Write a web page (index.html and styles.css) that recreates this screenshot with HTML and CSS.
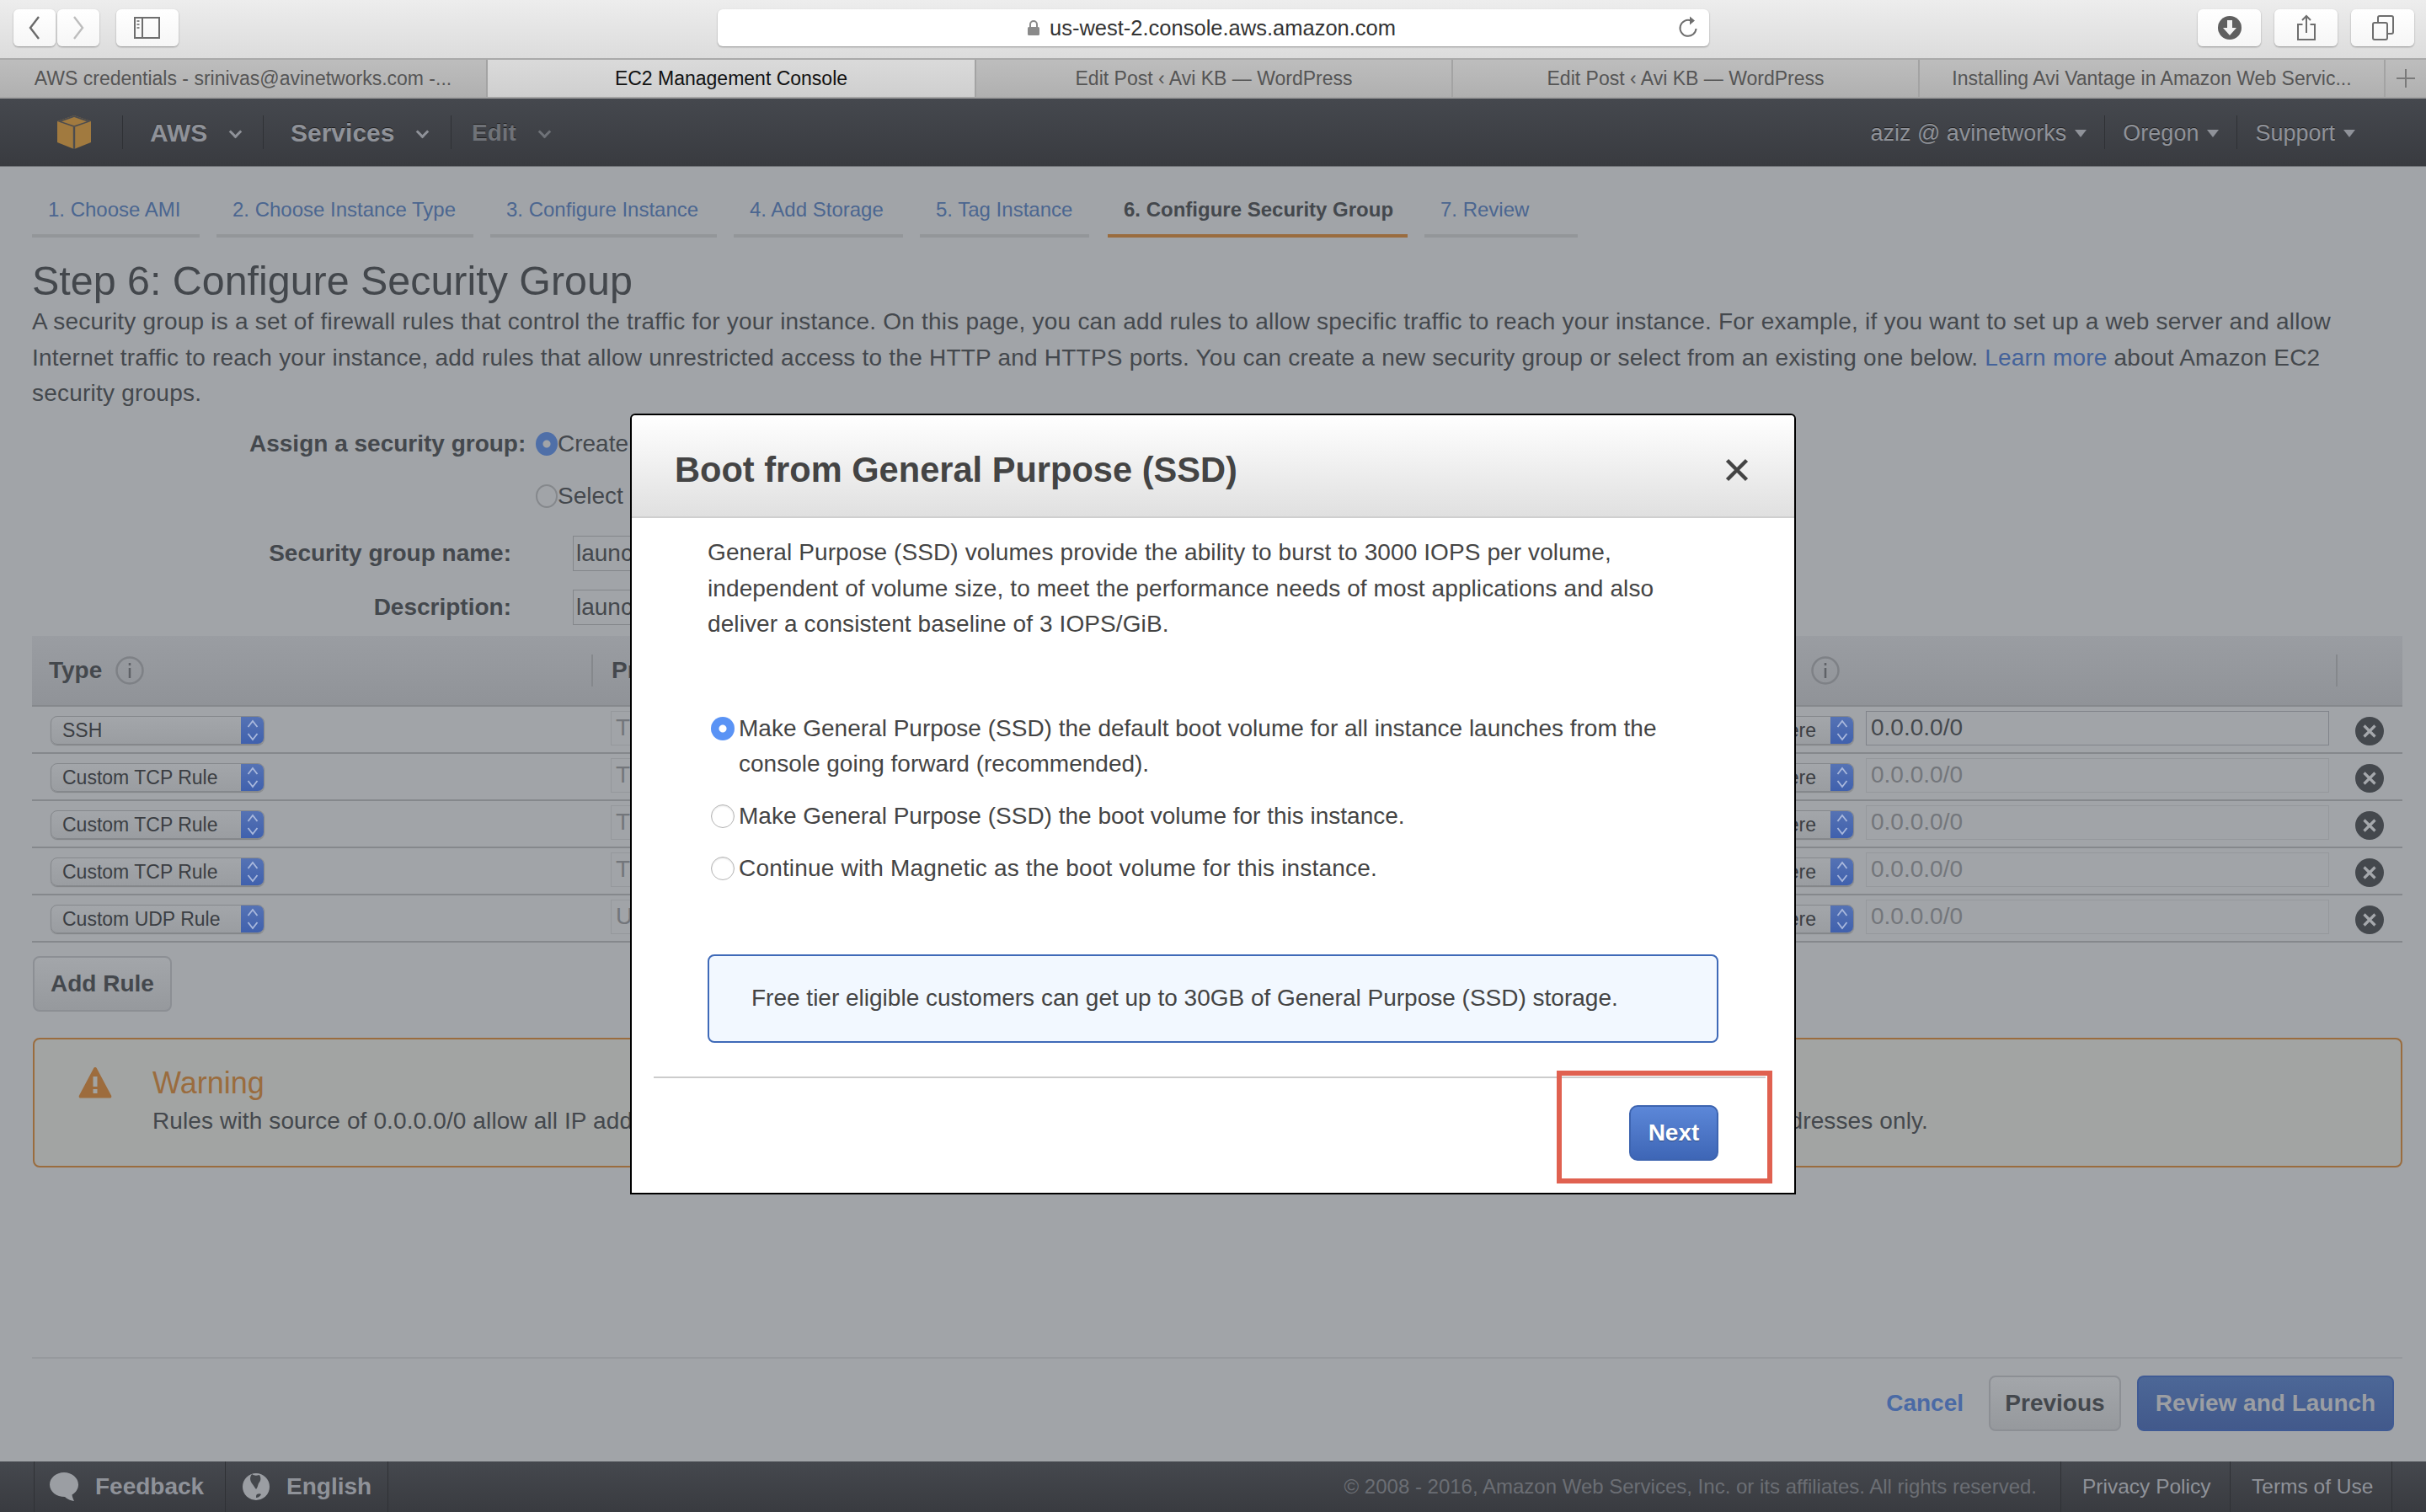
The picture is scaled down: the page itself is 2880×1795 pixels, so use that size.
FILE: index.html
```html
<!DOCTYPE html>
<html lang="en">
<head>
<meta charset="utf-8">
<title>EC2 Management Console</title>
<link rel="stylesheet" href="styles.css">
</head>
<body>
<header class="toolbar">
  <div class="tool-group nav-buttons">
    <button class="tool-btn back"><svg width="16" height="30" viewBox="0 0 16 30"><path d="M13 2 3 15l10 13" fill="none" stroke="#6a6a6a" stroke-width="2.4"/></svg></button>
    <button class="tool-btn forward"><svg width="16" height="30" viewBox="0 0 16 30"><path d="M3 2l10 13L3 28" fill="none" stroke="#bdbdbd" stroke-width="2.4"/></svg></button>
  </div>
  <button class="tool-btn sidebar"><svg width="32" height="26" viewBox="0 0 32 26"><rect x="1" y="1" width="29" height="24" fill="none" stroke="#6e6e6e" stroke-width="2"/><path d="M10 1v24" stroke="#6e6e6e" stroke-width="2"/><path d="M3.5 5h3M3.5 9h3M3.5 13h3" stroke="#8a8a8a" stroke-width="2"/></svg></button>
  <div class="address">
    <svg class="lock" width="16" height="20" viewBox="0 0 16 20"><path d="M4 9V6a4 4 0 0 1 8 0v3" fill="none" stroke="#8a8a8a" stroke-width="2"/><rect x="1" y="9" width="14" height="10" rx="1.5" fill="#8a8a8a"/></svg>
    <span class="url">us-west-2.console.aws.amazon.com</span>
    <svg class="reload" width="26" height="30" viewBox="0 0 26 30"><path d="M16.500 6.500A9.500 9.500 0 1 0 22.500 16" fill="none" stroke="#6e6e6e" stroke-width="2"/><path d="M15 1.500 21 6.500 15 11.500z" fill="#6e6e6e"/></svg>
  </div>
  <div class="tool-group right-tools">
    <button class="tool-btn wide"><svg width="30" height="30" viewBox="0 0 30 30"><circle cx="15" cy="15" r="14" fill="#5f5f5f"/><path d="M12 6h6v9h5l-8 9-8-9h5z" fill="#f2f2f2"/></svg></button>
    <button class="tool-btn wide"><svg width="26" height="32" viewBox="0 0 26 32"><path d="M8.500 12H3v18h20V12h-5.500" fill="none" stroke="#6e6e6e" stroke-width="2"/><path d="M13 22V2M8 7l5-5 5 5" fill="none" stroke="#6e6e6e" stroke-width="2"/></svg></button>
    <button class="tool-btn wide"><svg width="28" height="30" viewBox="0 0 28 30"><rect x="2" y="9" width="17" height="20" rx="2" fill="none" stroke="#6e6e6e" stroke-width="2"/><path d="M8 9V3a2 2 0 0 1 2-2h14a2 2 0 0 1 2 2v17a2 2 0 0 1-2 2h-5" fill="none" stroke="#6e6e6e" stroke-width="2"/></svg></button>
  </div>
</header>

<nav class="tabs">
  <div class="tab t1">AWS credentials - srinivas@avinetworks.com -...</div>
  <div class="tab t2 active">EC2 Management Console</div>
  <div class="tab t3">Edit Post ‹ Avi KB — WordPress</div>
  <div class="tab t4">Edit Post ‹ Avi KB — WordPress</div>
  <div class="tab t5">Installing Avi Vantage in Amazon Web Servic...</div>
  <div class="tab-add"><svg width="22" height="22" viewBox="0 0 22 22"><path d="M11 0v22M0 11h22" stroke="#7a7a7a" stroke-width="2"/></svg></div>
</nav>

<nav class="awsnav">
  <div class="nav-cell logo-cell">
    <svg width="40" height="40" viewBox="0 0 40 40"><path d="M20 0 40 7v25L20 40 0 32V7z" fill="#a17a3f"/><path d="M0 7 20 14 40 7 20 0z" fill="#4b4c4f"/><path d="M5 7.200 20 2 35 7.200 20 12.300z" fill="#a17a3f"/><path d="M18.800 14h2.400v26h-2.400z" fill="#4b4c4f"/></svg>
  </div>
  <div class="nav-cell aws"><b>AWS</b><i class="chev"></i></div>
  <div class="nav-cell services"><b>Services</b><i class="chev"></i></div>
  <div class="nav-cell edit"><b>Edit</b><i class="chev"></i></div>
  <div class="nav-right">
    <div class="nav-link user">aziz @ avinetworks<i class="caret"></i></div>
    <div class="nav-link region">Oregon<i class="caret"></i></div>
    <div class="nav-link support">Support<i class="caret"></i></div>
  </div>
</nav>

<main class="main">
  <ul class="steps">
    <li class="s1">1. Choose AMI</li>
    <li class="s2">2. Choose Instance Type</li>
    <li class="s3">3. Configure Instance</li>
    <li class="s4">4. Add Storage</li>
    <li class="s5">5. Tag Instance</li>
    <li class="s6 current">6. Configure Security Group</li>
    <li class="s7">7. Review</li>
  </ul>
  <h1 class="page-title">Step 6: Configure Security Group</h1>
  <p class="intro">A security group is a set of firewall rules that control the traffic for your instance. On this page, you can add rules to allow specific traffic to reach your instance. For example, if you want to set up a web server and allow Internet traffic to reach your instance, add rules that allow unrestricted access to the HTTP and HTTPS ports. You can create a new security group or select from an existing one below. <a>Learn more</a> about Amazon EC2 security groups.</p>

  <div class="form">
    <div class="assign-row">
      <label class="assign-label">Assign a security group:</label>
      <span class="radio on-dim"></span><span class="radio-text">Create a new security group</span>
    </div>
    <div class="assign-row second">
      <span class="radio off-dim"></span><span class="radio-text">Select an existing security group</span>
    </div>
    <div class="field-row first">
      <label class="field-label">Security group name:</label>
      <span class="text-input">launch-wizard-1</span>
    </div>
    <div class="field-row">
      <label class="field-label">Description:</label>
      <span class="text-input">launch-wizard-1 created 2016-05-09</span>
    </div>
  </div>

  <div class="table">
    <div class="thead">
      <div class="th type-th">Type <svg class="info" width="34" height="36" viewBox="0 0 34 36"><circle cx="17" cy="18" r="15.500" fill="none" stroke="#7e8186" stroke-width="2.500"/><path d="M17 9v3M17 15v12" stroke="#5f6267" stroke-width="2.500"/></svg></div>
      <div class="th proto-th">Protocol</div>
      <div class="th source-th"><svg class="info" width="34" height="36" viewBox="0 0 34 36"><circle cx="17" cy="18" r="15.500" fill="none" stroke="#7e8186" stroke-width="2.500"/><path d="M17 9v3M17 15v12" stroke="#5f6267" stroke-width="2.500"/></svg></div>
      <div class="th end-th"></div>
    </div>

    <div class="row">
      <div class="select type-select"><span class="select-text">SSH</span><span class="stepper"><svg width="14" height="28" viewBox="0 0 14 28"><path d="M1.500 10 7 3l5.500 7M1.500 18 7 25l5.500-7" fill="none" stroke="#a9b8dc" stroke-width="1.800"/></svg></span></div>
      <span class="cell-input proto">TCP</span>
      <span class="cell-input port">22</span>
      <div class="select source-select"><span class="select-text">Anywhere</span><span class="stepper"><svg width="14" height="28" viewBox="0 0 14 28"><path d="M1.500 10 7 3l5.500 7M1.500 18 7 25l5.500-7" fill="none" stroke="#a9b8dc" stroke-width="1.800"/></svg></span></div>
      <span class="cell-input cidr focus">0.0.0.0/0</span>
      <svg class="del" width="34" height="34" viewBox="0 0 34 34"><circle cx="17" cy="17" r="17" fill="#44484d"/><path d="M10.500 10.500l13 13M23.500 10.500l-13 13" stroke="#a5a8ac" stroke-width="3.200"/></svg>
    </div>
    <div class="row">
      <div class="select type-select"><span class="select-text">Custom TCP Rule</span><span class="stepper"><svg width="14" height="28" viewBox="0 0 14 28"><path d="M1.500 10 7 3l5.500 7M1.500 18 7 25l5.500-7" fill="none" stroke="#a9b8dc" stroke-width="1.800"/></svg></span></div>
      <span class="cell-input proto">TCP</span>
      <span class="cell-input port">8443</span>
      <div class="select source-select"><span class="select-text">Anywhere</span><span class="stepper"><svg width="14" height="28" viewBox="0 0 14 28"><path d="M1.500 10 7 3l5.500 7M1.500 18 7 25l5.500-7" fill="none" stroke="#a9b8dc" stroke-width="1.800"/></svg></span></div>
      <span class="cell-input cidr">0.0.0.0/0</span>
      <svg class="del" width="34" height="34" viewBox="0 0 34 34"><circle cx="17" cy="17" r="17" fill="#44484d"/><path d="M10.500 10.500l13 13M23.500 10.500l-13 13" stroke="#a5a8ac" stroke-width="3.200"/></svg>
    </div>
    <div class="row">
      <div class="select type-select"><span class="select-text">Custom TCP Rule</span><span class="stepper"><svg width="14" height="28" viewBox="0 0 14 28"><path d="M1.500 10 7 3l5.500 7M1.500 18 7 25l5.500-7" fill="none" stroke="#a9b8dc" stroke-width="1.800"/></svg></span></div>
      <span class="cell-input proto">TCP</span>
      <span class="cell-input port">8080</span>
      <div class="select source-select"><span class="select-text">Anywhere</span><span class="stepper"><svg width="14" height="28" viewBox="0 0 14 28"><path d="M1.500 10 7 3l5.500 7M1.500 18 7 25l5.500-7" fill="none" stroke="#a9b8dc" stroke-width="1.800"/></svg></span></div>
      <span class="cell-input cidr">0.0.0.0/0</span>
      <svg class="del" width="34" height="34" viewBox="0 0 34 34"><circle cx="17" cy="17" r="17" fill="#44484d"/><path d="M10.500 10.500l13 13M23.500 10.500l-13 13" stroke="#a5a8ac" stroke-width="3.200"/></svg>
    </div>
    <div class="row">
      <div class="select type-select"><span class="select-text">Custom TCP Rule</span><span class="stepper"><svg width="14" height="28" viewBox="0 0 14 28"><path d="M1.500 10 7 3l5.500 7M1.500 18 7 25l5.500-7" fill="none" stroke="#a9b8dc" stroke-width="1.800"/></svg></span></div>
      <span class="cell-input proto">TCP</span>
      <span class="cell-input port">443</span>
      <div class="select source-select"><span class="select-text">Anywhere</span><span class="stepper"><svg width="14" height="28" viewBox="0 0 14 28"><path d="M1.500 10 7 3l5.500 7M1.500 18 7 25l5.500-7" fill="none" stroke="#a9b8dc" stroke-width="1.800"/></svg></span></div>
      <span class="cell-input cidr">0.0.0.0/0</span>
      <svg class="del" width="34" height="34" viewBox="0 0 34 34"><circle cx="17" cy="17" r="17" fill="#44484d"/><path d="M10.500 10.500l13 13M23.500 10.500l-13 13" stroke="#a5a8ac" stroke-width="3.200"/></svg>
    </div>
    <div class="row">
      <div class="select type-select"><span class="select-text">Custom UDP Rule</span><span class="stepper"><svg width="14" height="28" viewBox="0 0 14 28"><path d="M1.500 10 7 3l5.500 7M1.500 18 7 25l5.500-7" fill="none" stroke="#a9b8dc" stroke-width="1.800"/></svg></span></div>
      <span class="cell-input proto">UDP</span>
      <span class="cell-input port">53</span>
      <div class="select source-select"><span class="select-text">Anywhere</span><span class="stepper"><svg width="14" height="28" viewBox="0 0 14 28"><path d="M1.500 10 7 3l5.500 7M1.500 18 7 25l5.500-7" fill="none" stroke="#a9b8dc" stroke-width="1.800"/></svg></span></div>
      <span class="cell-input cidr">0.0.0.0/0</span>
      <svg class="del" width="34" height="34" viewBox="0 0 34 34"><circle cx="17" cy="17" r="17" fill="#44484d"/><path d="M10.500 10.500l13 13M23.500 10.500l-13 13" stroke="#a5a8ac" stroke-width="3.200"/></svg>
    </div>
  </div>

  <button class="btn add-rule">Add Rule</button>

  <section class="warning">
    <svg class="warn-icon" width="40" height="38" viewBox="0 0 40 38"><path d="M20 1c1 0 1.500.5 2 1.500l17 32c.8 1.500 0 3-1.500 3h-35C1 37.500.2 36 1 34.500l17-32C18.500 1.500 19 1 20 1z" fill="#9d6c3d"/><path d="M17.500 12h5v12h-5zM17.500 27h5v5h-5z" fill="#a2a4a3"/></svg>
    <div class="warn-body">
      <div class="warn-title">Warning</div>
      <div class="warn-text">Rules with source of 0.0.0.0/0 allow all IP addresses to access your instance. We recommend setting security group rules to allow access from known IP addresses only.</div>
    </div>
  </section>

  <div class="actions">
    <a class="cancel">Cancel</a>
    <button class="btn previous">Previous</button>
    <button class="btn review">Review and Launch</button>
  </div>
</main>

<footer class="footer">
  <div class="foot-cell feedback">
    <svg width="34" height="34" viewBox="0 0 34 34"><path d="M17 0c9.400 0 17 6.500 17 14.500 0 5-3 9.500-7.500 12 .3 2.500 1.200 5 2.500 7.500-4-.5-8-2.200-11-5C8 29 0 23 0 14.500 0 6.500 7.600 0 17 0z" fill="#9b9ea3"/></svg>
    <b>Feedback</b>
  </div>
  <div class="foot-cell language">
    <svg width="32" height="34" viewBox="0 0 32 34"><circle cx="16" cy="17" r="16" fill="#9b9ea3"/><path d="M11 2c3 2 5 2 9 1 2 3 2 7-1 10-1 2-1 5-3 7-2-2-3-5-5-7-2-3-3-7 0-11zM17 26c2-1 4-1 5 0-1 2-3 4-6 4 0-2 0-3 1-4z" fill="#44474c"/></svg>
    <b>English</b>
  </div>
  <div class="copyright">© 2008 - 2016, Amazon Web Services, Inc. or its affiliates. All rights reserved.</div>
  <div class="foot-link privacy">Privacy Policy</div>
  <div class="foot-link terms">Terms of Use</div>
</footer>

<div class="modal">
  <div class="modal-head">
    <h2>Boot from General Purpose (SSD)</h2>
    <svg class="close" width="28" height="28" viewBox="0 0 28 28"><path d="M2.500 2.500l23 23M25.500 2.500l-23 23" stroke="#444" stroke-width="4.500"/></svg>
  </div>
  <div class="modal-body">
    <p class="modal-text">General Purpose (SSD) volumes provide the ability to burst to 3000 IOPS per volume, independent of volume size, to meet the performance needs of most applications and also deliver a consistent baseline of 3 IOPS/GiB.</p>
    <div class="option first-option"><span class="mradio checked"></span><span class="option-text">Make General Purpose (SSD) the default boot volume for all instance launches from the console going forward (recommended).</span></div>
    <div class="option"><span class="mradio"></span><span class="option-text">Make General Purpose (SSD) the boot volume for this instance.</span></div>
    <div class="option last-option"><span class="mradio"></span><span class="option-text">Continue with Magnetic as the boot volume for this instance.</span></div>
    <div class="free-tier">Free tier eligible customers can get up to 30GB of General Purpose (SSD) storage.</div>
  </div>
  <div class="modal-foot">
    <button class="next">Next</button>
  </div>
</div>
<div class="highlight"></div>
</body>
</html>
```
FILE: styles.css
```css
* { box-sizing: border-box; }
html, body { margin: 0; padding: 0; }
body {
  width: 2880px; height: 1795px; overflow: hidden; position: relative;
  display: flex; flex-direction: column;
  font-family: "Liberation Sans", Arial, sans-serif; font-size: 28px; color: #44484d;
  background: #a1a4a8;
}
button { font-family: inherit; padding: 0; margin: 0; }

/* browser chrome */
.toolbar {
  height: 71px; flex: none; display: flex; align-items: flex-start; padding: 11px 0 0 16px;
  background: linear-gradient(#ededed, #dcdcdc); border-bottom: 2px solid #a9a9a9;
}
.tool-group { display: flex; }
.nav-buttons { gap: 2px; }
.tool-btn {
  height: 44px; width: 50px; background: linear-gradient(#fff, #f6f6f6); border: 0; border-radius: 6px;
  box-shadow: 0 1px 2px rgba(0,0,0,.35); display: flex; align-items: center; justify-content: center;
}
.sidebar { width: 74px; margin-left: 20px; }
.address {
  width: 1177px; height: 44px; margin-left: 640px; background: #fff; border-radius: 6px; position: relative;
  box-shadow: 0 1px 2px rgba(0,0,0,.35); display: flex; align-items: center; padding-left: 367px;
}
.lock { margin-right: 11px; }
.url { font-size: 25.500px; color: #333; }
.reload { position: absolute; right: 12px; top: 7px; }
.right-tools { margin-left: 580px; gap: 16px; }
.wide { width: 75px; }

.tabs { height: 46px; flex: none; display: flex; background: linear-gradient(#bdbdbd, #b0b0b0); border-bottom: 2px solid #a3a3a3; font-size: 23px; color: #555; }
.tab { display: flex; align-items: center; justify-content: center; border-right: 2px solid #a3a3a3; white-space: nowrap; }
.t1 { width: 579px; }
.t2 { width: 580px; }
.t3 { width: 566px; }
.t4 { width: 554px; }
.t5 { width: 553px; }
.tab.active { background: linear-gradient(#dadada, #cfcfcf); color: #111; }
.tab-add { flex: 1; display: flex; align-items: center; justify-content: center; }

/* console nav */
.awsnav {
  height: 81px; flex: none; display: flex; align-items: center; color: #8f9299; border-bottom: 1px solid #6e7175;
  background: linear-gradient(#45484e, #393b40);
}
.nav-cell { height: 40px; display: flex; align-items: center; border-right: 1px solid #2f3135; font-size: 30px; padding-top: 2px; }
.nav-cell b { text-shadow: 0 -1px 0 #222; }
.logo-cell { width: 146px; padding-left: 68px; padding-top: 0; }
.aws { width: 167px; padding-left: 32px; }
.services { width: 223px; padding-left: 32px; }
.edit { border: 0; padding-left: 24px; color: #6f7278; }
.edit b { font-size: 28px; }
.chev { display: inline-block; width: 11px; height: 11px; border-right: 3px solid #8f9299; border-bottom: 3px solid #8f9299; transform: rotate(45deg); margin: -4px 0 0 28px; }
.edit .chev { border-color: #6f7278; }
.nav-right { margin-left: auto; display: flex; height: 40px; font-size: 27px; }
.nav-link { display: flex; align-items: center; border-right: 1px solid #2f3135; padding: 2px 21px 0; text-shadow: 0 -1px 0 #222; }
.nav-link:last-child { border: 0; padding-right: 84px; }
.caret { width: 0; height: 0; border: 7px solid transparent; border-top: 9px solid #8f9299; border-bottom: 0; margin-left: 10px; }

/* main page */
.main { flex: 1; min-height: 0; padding: 0 28px 0 38px; display: flex; flex-direction: column; }
.steps { list-style: none; margin: 32px 0 0; padding: 0; display: flex; gap: 20px; font-size: 24px; color: #4b6690; height: 52px; }
.steps li { height: 52px; padding: 5px 0 0 19px; border-bottom: 4px solid #939699; white-space: nowrap; }
.s1 { width: 199px; } .s2 { width: 305px; } .s3 { width: 269px; } .s4 { width: 201px; } .s5 { width: 201px; }
.s6 { width: 356px; margin-left: 2px; } .s7 { width: 182px; }
.steps li.current { border-bottom-color: #9a6c3e; color: #44484d; font-weight: bold; }
.page-title { font-size: 48.400px; font-weight: normal; line-height: 56px; margin: 23px 0 0; color: #43474c; }
.intro { margin: 0; line-height: 42.500px; font-size: 28px; width: 2800px; letter-spacing: .22px; }
.intro a { color: #44629a; }

.form { margin-bottom: 13px; flex: none; }
.assign-row { display: flex; align-items: center; height: 28px; margin-top: 24px; padding-left: 598px; white-space: nowrap; }
.assign-row.second { margin-top: 34px; }
.assign-label { font-weight: bold; margin-left: -340px; width: 340px; text-align: right; padding-right: 19px; flex: none; }
.radio { width: 26px; height: 28px; border-radius: 50%; flex: none; }
.on-dim { background: radial-gradient(circle, #a1a4a8 0 4px, #4f6fa8 5px); }
.off-dim { border: 2px solid #85888c; }
.field-row { display: flex; align-items: center; height: 42px; margin-top: 22px; white-space: nowrap; }
.field-row.first { margin-top: 33px; }
.field-label { width: 569px; text-align: right; font-weight: bold; margin-right: 73px; flex: none; }
.text-input { width: 400px; height: 42px; border: 1px solid #84878b; padding-left: 3px; line-height: 40px; overflow: hidden; }

.table { flex: none; }
.thead { height: 84px; display: flex; align-items: center; background: linear-gradient(#9a9da2, #909398); border-bottom: 2px solid #85888c; font-weight: bold; }
.th { height: 38px; display: flex; align-items: center; }
.type-th { width: 666px; padding-left: 20px; border-right: 2px solid #85888c; gap: 16px; }
.proto-th { padding-left: 22px; width: 1446px; }
.source-th { width: 623px; }
.end-th { border-left: 2px solid #85888c; }
.row { height: 56px; display: grid; grid-template-columns: 665px 300px 300px 890px 550px 1fr; align-items: start; padding-left: 22px; border-bottom: 2px solid #85888c; font-size: 23px; }
.select { height: 34px; margin-top: 11px; border: 1px solid #85888c; border-radius: 8px; display: flex; overflow: hidden; background: linear-gradient(#a3a6aa, #9a9da1); box-shadow: 0 1px 1px rgba(0,0,0,.2); }
.select-text { flex: 1; padding-left: 13px; line-height: 33px; color: #3b3e43; white-space: nowrap; }
.stepper { width: 28px; flex: none; background: linear-gradient(#5673b4, #3f60ad); display: flex; align-items: center; justify-content: center; margin: -1px -1px -1px 0; }
.type-select { width: 254px; }
.source-select { width: 200px; justify-self: end; margin-right: 14px; }
.source-select .select-text { text-align: right; padding-right: 17px; }
.cell-input { height: 41px; margin-top: 5px; border: 1px solid #95989c; color: #73767b; font-size: 28px; line-height: 37px; padding-left: 5px; }
.cell-input.proto, .cell-input.port { margin-right: 20px; }
.cidr { width: 550px; }
.cidr.focus { color: #44484d; border-color: #80838a; }
.del { margin: 12px 0 0 31px; }

.btn { border-radius: 8px; font-weight: bold; font-size: 28px; border: 2px solid #8c8f94; background: linear-gradient(#a3a6aa, #96999d); color: #44484d; }
.add-rule { width: 165px; height: 66px; margin-top: 16px; flex: none; align-self: flex-start; margin-left: 1px; }

.warning { height: 154px; flex: none; margin: 31px 0 0 1px; border: 2px solid #9a6c3e; border-radius: 8px; background: #a2a4a3; display: flex; padding-left: 52px; }
.warn-icon { margin-top: 32px; flex: none; }
.warn-body { margin-left: 48px; padding-top: 30px; }
.warn-title { font-size: 36px; line-height: 44px; color: #9a6c3e; }
.warn-text { font-size: 28px; line-height: 46px; white-space: nowrap; letter-spacing: .12px; }

.actions { flex: none; margin-top: 225px; border-top: 2px solid #96999d; display: flex; align-items: center; justify-content: flex-end; padding: 20px 10px 0 0; }
.cancel { font-weight: bold; color: #4a6aa5; margin-right: 30px; }
.previous { width: 157px; height: 66px; margin-right: 19px; }
.review { width: 305px; height: 66px; background: linear-gradient(#4c6797, #42598b); border-color: #3f5a94; color: #9b9ea3; }

/* console footer */
.footer { height: 60px; flex: none; display: flex; align-items: center; background: linear-gradient(#45484e, #393b40); color: #8f9299; padding-left: 40px; }
.foot-cell { height: 60px; display: flex; align-items: center; border-right: 1px solid #2f3135; font-size: 28px; }
.feedback { width: 228px; padding-left: 18px; gap: 20px; border-left: 1px solid #2f3135; }
.language { width: 193px; padding-left: 20px; gap: 20px; }
.copyright { margin-left: auto; font-size: 24px; color: #6b6e74; white-space: nowrap; }
.foot-link { height: 60px; display: flex; align-items: center; border-left: 1px solid #2f3135; font-size: 24.500px; }
.privacy { width: 201px; margin-left: 28px; padding-left: 25px; }
.terms { width: 193px; padding-left: 25px; border-right: 1px solid #2f3135; margin-right: 40px; }

/* dialog */
.modal {
  position: absolute; left: 748px; top: 491px; width: 1384px; height: 927px; background: #fff;
  border: 2px solid #000; border-radius: 6px 6px 0 0; color: #444; display: flex; flex-direction: column;
}
.modal-head {
  height: 122px; flex: none; padding: 10px 0 0 51px; display: flex; align-items: center; justify-content: space-between;
  background: linear-gradient(#fff, #e0e0e0); border-bottom: 2px solid #cfcfcf; border-radius: 5px 5px 0 0;
}
.modal-head h2 { margin: 0; font-size: 41.600px; line-height: 50px; color: #444; }
.close { margin-right: 54px; }
.modal-body { flex: 1; padding: 20px 90px 0 90px; }
.modal-text { margin: 0 0 81px; line-height: 42.500px; font-size: 28px; width: 1160px; letter-spacing: .1px; }
.option { display: flex; width: 1160px; margin-top: 19px; line-height: 42.500px; }
.first-option { margin-top: 0; }
.last-option { margin-top: 20px; letter-spacing: .18px; }
.mradio { width: 28px; height: 28px; border-radius: 50%; flex: none; margin: 7px 5px 0 4px; border: 1px solid #b5b5b5; box-shadow: inset 0 1px 2px rgba(0,0,0,.12); }
.mradio.checked { border: 0; box-shadow: none; background: radial-gradient(circle, #fff 0 4px, #5a93f5 5px); }
.option-text { flex: 1; }
.free-tier { width: 1200px; height: 105px; margin-top: 80px; border: 2px solid #3f6ab8; border-radius: 8px; background: #f2f8ff; padding-left: 50px; line-height: 99px; }
.modal-foot { flex: none; height: 138px; margin: 0 34px 0 26px; border-top: 2px solid #ccc; display: flex; justify-content: flex-end; padding: 32px 0 0; }
.next { width: 106px; height: 66px; margin-right: 56px; border-radius: 10px; border: 2px solid #3d64b0; background: linear-gradient(#5c87d8, #3e66b6); color: #fff; font-size: 28px; font-weight: bold; text-shadow: 0 1px 1px rgba(0,0,0,.35); }
.highlight { position: absolute; left: 1848px; top: 1271px; width: 256px; height: 134px; border: 6px solid #e06150; }
```
